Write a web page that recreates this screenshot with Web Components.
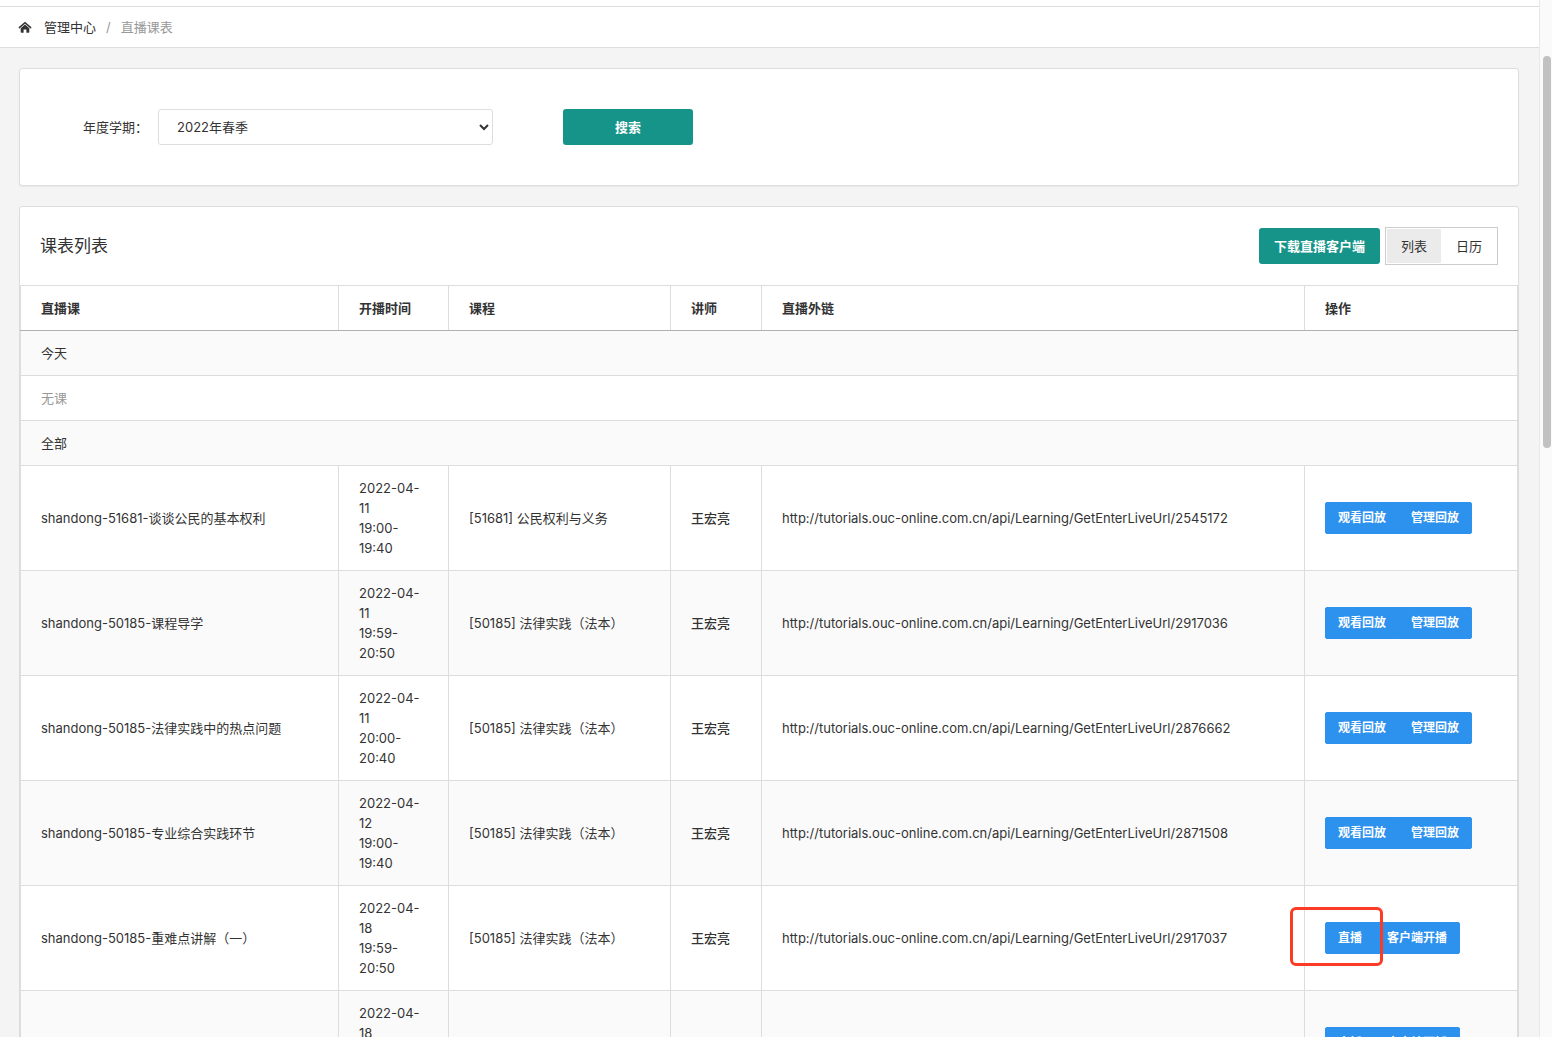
<!DOCTYPE html>
<html lang="zh-CN">
<head>
<meta charset="utf-8">
<title>直播课表</title>
<style>
  body {
    margin: 0;
    font: 13px/20px Inter, "Noto Sans CJK SC", sans-serif;
    color: #333;
    background: #f4f4f4;
  }
</style>
</head>
<body>
<app-shell>
  <crumb-bar slot="top" current="直播课表">管理中心</crumb-bar>
  <panel-card><search-form></search-form></panel-card>
  <panel-card>
    <list-header>课表列表</list-header>
    <schedule-table></schedule-table>
  </panel-card>
</app-shell>
<script>
  const define = (name, html, setup) => {
    const template = document.createElement('template');
    template.innerHTML = '<style>*{box-sizing:border-box}button,select{font:inherit;color:inherit;margin:0}</style>' + html;
    customElements.define(name, class extends HTMLElement {
      constructor() {
        super();
        this.attachShadow({ mode: 'open' }).append(template.content.cloneNode(true));
      }
      connectedCallback() {
        if (setup) setup(this, this.shadowRoot);
      }
    });
  };

  define('scroll-rail', `
    <style>
      :host { display: block; flex: none; width: 13px; padding: 56px 1px 0 3px; box-sizing: border-box;
              background: #fafafa; border-left: 1px solid #e8e8e8; }
      div { height: 40%; border-radius: 4px; background: #c1c1c1; }
    </style>
    <div></div>`);

  define('app-shell', `
    <style>
      :host { display: flex; height: 100vh; overflow: hidden; }
      .view { flex: 1; min-width: 0; overflow: hidden; }
      main { display: flex; flex-direction: column; gap: 20px; padding: 20px 20px 20px 19px; }
    </style>
    <div class="view">
      <slot name="top"></slot>
      <main><slot></slot></main>
    </div>
    <scroll-rail></scroll-rail>`);

  define('crumb-bar', `
    <style>
      :host { display: block; padding-top: 6px; background: #fff; }
      nav { display: flex; align-items: center; gap: 10px; height: 42px; padding: 0 18px;
            border-top: 1px solid #ddd; border-bottom: 1px solid #ddd; }
      a { display: flex; align-items: center; gap: 12px; color: #333; text-decoration: none; }
      span { color: #999; }
      svg { display: block; }
    </style>
    <nav>
      <a href="#">
        <svg width="14" height="14" viewBox="0 0 14 14" aria-hidden="true">
          <path d="M1.3 7.6 7 2.7l5.7 4.9" fill="none" stroke="#333" stroke-width="1.5" stroke-linecap="round"/>
          <path d="M2.7 8.2 7 4.6l4.3 3.6V12q0 .8-.8.8H8.400V9.600H5.600v3.200H3.500q-.8 0-.8-.8z" fill="#333"/>
        </svg>
        <slot></slot>
      </a>
      <span>/</span>
      <span class="current"></span>
    </nav>`, (el, root) => {
      root.querySelector('.current').textContent = el.getAttribute('current');
    });

  define('panel-card', `
    <style>
      :host { display: block; background: #fff; border: 1px solid #ddd; border-radius: 3px;
              box-shadow: 0 1px 1px rgba(0,0,0,.05); }
    </style>
    <slot></slot>`);

  define('search-form', `
    <style>
      :host { display: block; padding: 40px 63px; }
      form { display: flex; align-items: center; }
      label { margin-right: 10px; }
      select { width: 335px; height: 36px; padding: 0 0 0 14px; background-color: #fff;
               border: 1px solid #ddd; border-radius: 3px; margin-right: 70px; }
      button { width: 130px; height: 36px; border: 0; border-radius: 3px; background: #169489;
               color: #fff; font-weight: 600; }
    </style>
    <form>
      <label for="term">年度学期：</label>
      <select id="term"><option>2022年春季</option></select>
      <button type="button">搜索</button>
    </form>`);

  define('list-header', `
    <style>
      :host { display: flex; align-items: center; justify-content: space-between;
              height: 78px; padding: 0 20px; box-sizing: border-box; }
      h2 { margin: 0; font-size: 17px; font-weight: 400; }
      .tools { display: flex; align-items: center; gap: 5px; }
      .download { height: 36px; padding: 0 15px; border: 0; border-radius: 3px;
                  background: #169489; color: #fff; font-weight: 600; }
      .views { display: flex; gap: 1px; height: 38px; padding: 1px; border: 1px solid #ccc; }
      .views button { padding: 0 14px; border: 0; background: none; }
      .views [aria-pressed=true] { background: #ebebeb; }
    </style>
    <h2><slot></slot></h2>
    <div class="tools">
      <button class="download" type="button">下载直播客户端</button>
      <div class="views">
        <button type="button" aria-pressed="true">列表</button>
        <button type="button" aria-pressed="false">日历</button>
      </div>
    </div>`);

  define('action-group', `
    <style>
      :host { display: inline-flex; position: relative; vertical-align: middle; }
      button { height: 32px; padding: 0 12px; border: 1px solid #2d91ee; background: #2d91ee;
               color: #fff; font-size: 12px; font-weight: 600; white-space: nowrap; }
      button:first-of-type { border-radius: 2px 0 0 2px; }
      button:last-of-type { border-radius: 0 2px 2px 0; margin-left: -1px; }
      .mark { display: none; }
      :host([marked]) .mark { display: block; position: absolute; left: -35px; top: -15px;
               width: 93px; height: 59px; border: 3px solid #fa3c26; border-radius: 6px; pointer-events: none; }
    </style>
    <button type="button"></button><button type="button"></button><div class="mark"></div>`, (el, root) => {
      const labels = el.getAttribute('labels').split(',');
      root.querySelectorAll('button').forEach((b, i) => { b.textContent = labels[i]; });
    });

  const replay = '观看回放,管理回放';
  const live = '直播,客户端开播';
  const rows = [
    ['shandong-51681-谈谈公民的基本权利', '2022-04-11', '19:00-19:40', '[51681] 公民权利与义务', '2545172', replay],
    ['shandong-50185-课程导学', '2022-04-11', '19:59-20:50', '[50185] 法律实践（法本）', '2917036', replay],
    ['shandong-50185-法律实践中的热点问题', '2022-04-11', '20:00-20:40', '[50185] 法律实践（法本）', '2876662', replay],
    ['shandong-50185-专业综合实践环节', '2022-04-12', '19:00-19:40', '[50185] 法律实践（法本）', '2871508', replay],
    ['shandong-50185-重难点讲解（一）', '2022-04-18', '19:59-20:50', '[50185] 法律实践（法本）', '2917037', live, 'marked'],
    ['', '2022-04-18', '19:59-20:50', '', '', live]
  ];
  const base = 'http://tutorials.ouc-online.com.cn/api/Learning/GetEnterLiveUrl/';
  const split = text => text.replace(/-(?=\d+$)/, '-<wbr>');

  define('schedule-table', `
    <style>
      :host { display: block; }
      table { width: 100%; table-layout: fixed; border-collapse: collapse; }
      th, td { padding: 12px 20px; border: 1px solid #ddd; text-align: left; font-weight: 400; }
      thead th { font-weight: 600; border-bottom-color: #b0b0b0; }
      tbody tr:nth-child(odd) { background: #fafafa; }
      tbody tr:nth-child(even) { background: #fff; }
      .muted { color: #999; }
      .teacher { font-weight: 500; }
      .name { width: 318px; } .time { width: 110px; } .course { width: 222px; }
      .who { width: 91px; } .ops { width: 213px; }
    </style>
    <table>
      <colgroup><col class="name"><col class="time"><col class="course"><col class="who"><col><col class="ops"></colgroup>
      <thead><tr><th>直播课</th><th>开播时间</th><th>课程</th><th>讲师</th><th>直播外链</th><th>操作</th></tr></thead>
      <tbody>
        <tr><td colspan="6">今天</td></tr>
        <tr><td colspan="6" class="muted">无课</td></tr>
        <tr><td colspan="6">全部</td></tr>
      </tbody>
    </table>`, (el, root) => {
      root.querySelector('tbody').insertAdjacentHTML('beforeend', rows.map(
        ([name, date, time, course, id, labels, mark = '']) => `
        <tr><td>${name}</td><td>${split(date)}<br>${time.replace('-', '-<wbr>')}</td><td>${course}</td>
        <td class="teacher">${name && '王宏亮'}</td><td>${id && base + id}</td>
        <td><action-group labels="${labels}" ${mark}></action-group></td></tr>`).join(''));
    });
</script>
</body>
</html>
